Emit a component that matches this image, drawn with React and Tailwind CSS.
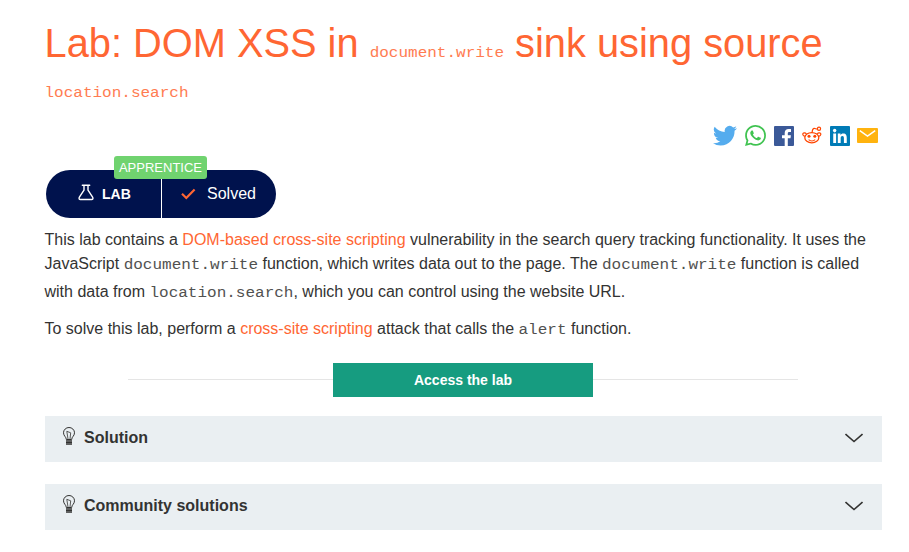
import React from "react";

function Code({ children }) {
  return (
    <code className="inline-block origin-[0_78%] scale-y-[0.86] font-['Liberation_Mono',monospace] text-base leading-none font-normal opacity-85">
      {children}
    </code>
  );
}

function Link({ children }) {
  return <a className="text-[#ff6633]">{children}</a>;
}

function ShareIcons() {
  return (
    <div className="flex h-6 items-center gap-2">
      <svg width="24" height="24" viewBox="0 0 24 24" fill="#55acee">
        <path transform="translate(0 .7)" d="M23.95 4.57a10 10 0 0 1-2.82.78 4.96 4.96 0 0 0 2.16-2.73c-.95.56-2 .96-3.13 1.18a4.92 4.92 0 0 0-8.38 4.49A13.94 13.94 0 0 1 1.64 3.16a4.92 4.92 0 0 0 1.52 6.57 4.9 4.9 0 0 1-2.23-.61v.06a4.92 4.92 0 0 0 3.95 4.83 4.95 4.95 0 0 1-2.21.08 4.94 4.94 0 0 0 4.6 3.42A9.87 9.87 0 0 1 0 19.54a13.94 13.94 0 0 0 7.55 2.21c9.05 0 14-7.5 14-13.98 0-.21 0-.42-.02-.63a9.94 9.94 0 0 0 2.46-2.55z" />
      </svg>
      <svg width="21" height="21" viewBox="0 0 24 24" fill="#40c351">
        <path d="M17.47 14.38c-.3-.15-1.76-.87-2.03-.97-.27-.1-.47-.15-.67.15-.2.3-.77.97-.94 1.16-.17.2-.35.22-.64.08-.3-.15-1.26-.46-2.39-1.48-.88-.79-1.48-1.76-1.65-2.06-.17-.3-.02-.46.13-.6.13-.14.3-.35.45-.53.15-.17.2-.3.3-.5.1-.2.05-.37-.03-.52-.07-.15-.67-1.61-.91-2.21-.24-.58-.49-.5-.67-.51h-.57c-.2 0-.52.07-.79.37-.27.3-1.04 1.02-1.04 2.48s1.06 2.88 1.21 3.07c.15.2 2.1 3.2 5.08 4.49.71.31 1.26.49 1.69.63.71.22 1.36.19 1.87.12.57-.09 1.76-.72 2.01-1.42.25-.69.25-1.29.17-1.41-.07-.12-.27-.2-.57-.35m-5.42 7.4a9.87 9.87 0 0 1-5.03-1.38l-.36-.21-3.74.98 1-3.65-.24-.37a9.86 9.86 0 0 1-1.51-5.26C2.17 6.44 6.6 2.01 12.05 2.01a9.82 9.82 0 0 1 9.88 9.89c0 5.45-4.43 9.88-9.88 9.88m8.41-18.3A11.82 11.82 0 0 0 12.05 0C5.5 0 .16 5.34.16 11.89c0 2.1.55 4.14 1.59 5.95L.06 24l6.3-1.65a11.88 11.88 0 0 0 5.69 1.45c6.55 0 11.89-5.34 11.89-11.9 0-3.17-1.24-6.16-3.48-8.42" />
      </svg>
      <svg className="mt-px" width="20" height="20" viewBox="0 0 20 20">
        <rect width="20" height="20" rx="1" fill="#3b5998" />
        <path d="M13.8 20v-7.7h2.7l.4-3h-3.1V7.4c0-.9.3-1.5 1.5-1.5h1.7V3.2c-.3 0-1.3-.1-2.4-.1-2.4 0-3.9 1.4-3.9 4v2.2H8v3h2.7V20z" fill="#fff" />
      </svg>
      <svg width="20" height="20" viewBox="0 0 20 20" fill="none" stroke="#ff4500">
        <ellipse cx="9.8" cy="12.7" rx="7" ry="5.1" strokeWidth="1.3" />
        <path d="M2.9 11.3C.3 10.900.1 8.100 2.200 7.900c.9-.1 1.700.3 2.200.9M16.700 11.300c2.600-.4 2.800-3.200.7-3.400-.9-.1-1.700.3-2.200.9" strokeWidth="1.2" />
        <path d="M10.1 7.5C10.3 5 10.800 3.600 12 3.400c1.100-.2 2 .7 3.500.7" strokeWidth="1.2" />
        <circle cx="17" cy="3.8" r="1.6" strokeWidth="1.2" />
        <circle cx="7" cy="11.3" r="1.5" fill="#ff4500" stroke="none" />
        <circle cx="12.8" cy="11.3" r="1.5" fill="#ff4500" stroke="none" />
        <path d="M6.6 14.7c1.8 1.5 4.8 1.5 6.6 0" strokeWidth="1.1" />
      </svg>
      <svg className="mt-px" width="20" height="20" viewBox="0 0 21 20" preserveAspectRatio="none">
        <rect width="21" height="20" rx="1" fill="#007bb6" />
        <g fill="#fff">
          <circle cx="4.9" cy="4.6" r="1.8" />
          <path d="M3.4 7.6h3V17h-3zM8.2 7.6H11v1.3c.5-.9 1.5-1.5 2.9-1.5 3 0 3.7 1.900 3.700 4.500V17h-3v-4.600c0-1.200-.1-2.500-1.600-2.500s-1.800 1.200-1.800 2.400V17h-3z" />
        </g>
      </svg>
      <svg className="-ml-px" width="21" height="15" viewBox="0 0 21 15">
        <rect width="21" height="15" rx="1" fill="#ffb30f" />
        <path d="M2.8 2.700 10.500 8l7.700-5.300" fill="none" stroke="#fff" strokeWidth="1.5" />
      </svg>
    </div>
  );
}

function StatusPill() {
  return (
    <div className="relative ml-[1px] mt-[23px] flex h-12 w-[230px] rounded-[24px] bg-[#00124d] text-white">
      <div className="flex w-[115px] items-center pl-8">
        <svg className="-mt-[3px]" width="16" height="17" viewBox="0 0 16 17" fill="none" stroke="#fff" strokeWidth="1.4" strokeLinecap="round" strokeLinejoin="round">
          <path d="M4.3 1.2h7.4M6 1.2v5L1.4 13.2c-.8 1.300-.2 2.300 1 2.300h11.200c1.200 0 1.800-1 1-2.300L10 6.200v-5" />
        </svg>
        <span className="-mt-px ml-2 text-sm font-bold">LAB</span>
      </div>
      <div className="flex flex-1 items-center border-l border-white pl-[19px]">
        <svg width="15" height="12" viewBox="0 0 15 12" fill="none" stroke="#ff6633" strokeWidth="2.2">
          <path d="m1 5.8 4.300 4.200L13.600 1.600" />
        </svg>
        <span className="ml-[11px] text-base">Solved</span>
      </div>
      <span className="absolute -top-3.5 left-[68px] flex h-[23px] w-[93px] items-center justify-center rounded-[3px] bg-[#70d36f] text-[13px]">
        APPRENTICE
      </span>
    </div>
  );
}

function Accordion({ title }) {
  return (
    <section className="flex h-[46px] items-center bg-[#eaeff2] pl-[18px] pr-[19px]">
      <svg className="-mt-[6px]" width="12" height="18" viewBox="0 0 12 18" fill="none" stroke="#333332">
        <path d="M3.3 12.500C3.300 9.800.5 9 .5 5.800a5.500 5.300 0 0 1 11 0c0 3.200-2.800 4-2.800 6.700z" strokeWidth="1" />
        <path d="M5 12 3.800 4.300l3.900 1.500L7 12" strokeWidth=".8" />
        <path d="M3 13.800h6M3 15.500h6M3 17.200h6" strokeWidth="1.3" />
      </svg>
      <h4 className="-mt-[3px] ml-[9px] text-base font-bold">{title}</h4>
      <svg className="-mt-[2px] ml-auto" width="18" height="10" viewBox="0 0 18 10" fill="none" stroke="#333332" strokeWidth="1.6">
        <path d="m.5 1 8.500 7.500L17.500 1" />
      </svg>
    </section>
  );
}

export default function App() {
  return (
    <main className="h-[552px] w-[909px] overflow-hidden bg-white pl-[45px] pr-[27px] font-['Liberation_Sans',Arial,sans-serif] text-base text-[#333332]">
      <h1 className="-ml-[0.5px] whitespace-nowrap pt-5 text-[39.8px] font-normal leading-[46px] text-[#ff6633]">
        <span className="block h-[46px]">Lab: DOM XSS in <Code>document.write</Code> sink using source</span>
        <span className="block h-10 leading-[34px]"><Code>location.search</Code></span>
      </h1>
      <div className="mt-[17px] flex justify-end pr-1">
        <ShareIcons />
      </div>
      <StatusPill />
      <p className="-ml-[0.5px] mt-[10px] whitespace-nowrap leading-6">
        <span className="block h-6">This lab contains a <Link>DOM-based cross-site scripting</Link> vulnerability in the search query tracking functionality. It uses the</span>
        <span className="block h-7">JavaScript <Code>document.write</Code> function, which writes data out to the page. The <Code>document.write</Code> function is called</span>
        <span className="block h-6">with data from <Code>location.search</Code>, which you can control using the website URL.</span>
      </p>
      <p className="-ml-[0.5px] mt-[13px] h-6 whitespace-nowrap leading-6">
        To solve this lab, perform a <Link>cross-site scripting</Link> attack that calls the <Code>alert</Code> function.
      </p>
      <div className="ml-[83px] mt-[22px] flex w-[670px] items-center">
        <span className="-mt-px h-px w-[205px] bg-[#e5e5e5]" />
        <button className="h-[34px] w-[260px] bg-[#169c80] text-sm font-bold text-white">Access the lab</button>
        <span className="-mt-px h-px flex-1 bg-[#e5e5e5]" />
      </div>
      <div className="mt-[19px] flex flex-col gap-[22px]">
        <Accordion title="Solution" />
        <Accordion title="Community solutions" />
      </div>
    </main>
  );
}
